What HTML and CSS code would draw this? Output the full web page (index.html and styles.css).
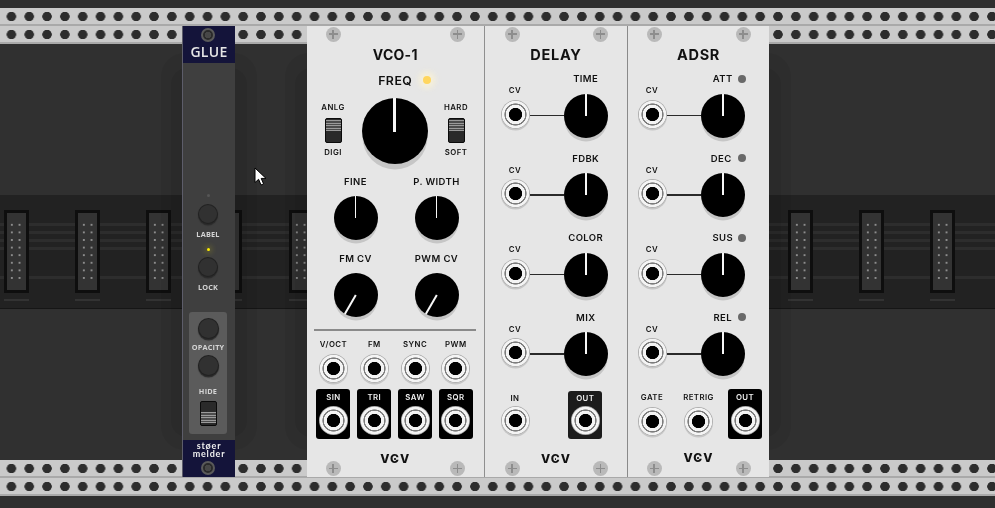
FILE: index.html
```html
<!DOCTYPE html>
<html lang="en">
<head>
    <meta charset="UTF-8">
    <meta name="viewport" content="width=device-width, initial-scale=1.0">
    <title>VCV Rack</title>
    <link rel="stylesheet" href="styles.css">
</head>
<body>
<div class="rack">
    <div class="rail"></div>
    <div class="rail"></div>
    <div class="wall"></div>
    <div class="band">
        <div class="conn"><div class="conn-body"><div class="pins"></div></div><div class="foot"></div></div>
        <div class="conn"><div class="conn-body"><div class="pins"></div></div><div class="foot"></div></div>
        <div class="conn"><div class="conn-body"><div class="pins"></div></div><div class="foot"></div></div>
        <div class="conn"><div class="conn-body"><div class="pins"></div></div><div class="foot"></div></div>
        <div class="conn"><div class="conn-body"><div class="pins"></div></div><div class="foot"></div></div>
        <div class="conn"><div class="conn-body"><div class="pins"></div></div><div class="foot"></div></div>
        <div class="conn"><div class="conn-body"><div class="pins"></div></div><div class="foot"></div></div>
        <div class="conn"><div class="conn-body"><div class="pins"></div></div><div class="foot"></div></div>
        <div class="conn"><div class="conn-body"><div class="pins"></div></div><div class="foot"></div></div>
        <div class="conn"><div class="conn-body"><div class="pins"></div></div><div class="foot"></div></div>
        <div class="conn"><div class="conn-body"><div class="pins"></div></div><div class="foot"></div></div>
        <div class="conn"><div class="conn-body"><div class="pins"></div></div><div class="foot"></div></div>
        <div class="conn"><div class="conn-body"><div class="pins"></div></div><div class="foot"></div></div>
        <div class="conn"><div class="conn-body"><div class="pins"></div></div><div class="foot"></div></div>
    </div>
    <div class="wall"></div>
    <div class="rail"></div>
    <div class="rail"></div>

    <div class="modules">
        <!-- glue -->
        <div class="glue shade">
            <div class="glue-head">
                <div class="glue-screw"></div>
                <div class="glue-title">GLUE</div>
            </div>
            <div class="glue-body">
                <div class="dot-off"></div>
                <div class="btn btn-label"></div>
                <div class="glue-lbl lbl-label">LABEL</div>
                <div class="dot-on"></div>
                <div class="btn btn-lock"></div>
                <div class="glue-lbl lbl-lock">LOCK</div>
                <div class="glue-box">
                    <div class="btn btn-big"></div>
                    <div class="glue-lbl lbl-opacity">OPACITY</div>
                    <div class="btn btn-big btn-hide"></div>
                    <div class="glue-lbl lbl-hide">HIDE</div>
                    <div class="switch switch-low"></div>
                </div>
            </div>
            <div class="glue-foot">
                <div class="brand">støer</div>
                <div class="brand">melder</div>
                <div class="glue-screw"></div>
            </div>
        </div>

        <div class="bank shade">
            <!-- vco -->
            <div class="panel vco">
                <div class="screws"><div class="screw"></div><div class="screw"></div></div>
                <div class="title">VCO-1</div>
                <div class="freq-row">
                    <div></div>
                    <div class="lbl-lg">FREQ</div>
                    <div><div class="led-yellow"></div></div>
                </div>
                <div class="main-row">
                    <div class="side">
                        <div class="lbl-sm">ANLG</div>
                        <div class="switch"></div>
                        <div class="lbl-sm">DIGI</div>
                    </div>
                    <div class="knob knob-xl"></div>
                    <div class="side">
                        <div class="lbl-sm">HARD</div>
                        <div class="switch"></div>
                        <div class="lbl-sm">SOFT</div>
                    </div>
                </div>
                <div class="knob-grid">
                    <div class="cell"><div class="lbl-md">FINE</div><div class="knob"></div></div>
                    <div class="cell"><div class="lbl-md">P. WIDTH</div><div class="knob"></div></div>
                    <div class="cell"><div class="lbl-md">FM CV</div><div class="knob knob-min"></div></div>
                    <div class="cell"><div class="lbl-md">PWM CV</div><div class="knob knob-min"></div></div>
                </div>
                <div class="divider"></div>
                <div class="jack-grid">
                    <div class="jack"><div class="lbl-sm">V/OCT</div><div class="port"></div></div>
                    <div class="jack"><div class="lbl-sm">FM</div><div class="port"></div></div>
                    <div class="jack"><div class="lbl-sm">SYNC</div><div class="port"></div></div>
                    <div class="jack"><div class="lbl-sm">PWM</div><div class="port"></div></div>
                    <div class="out"><div class="lbl-sm">SIN</div><div class="port"></div></div>
                    <div class="out"><div class="lbl-sm">TRI</div><div class="port"></div></div>
                    <div class="out"><div class="lbl-sm">SAW</div><div class="port"></div></div>
                    <div class="out"><div class="lbl-sm">SQR</div><div class="port"></div></div>
                </div>
                <div class="logo">VCV</div>
                <div class="screws screws-low"><div class="screw"></div><div class="screw"></div></div>
            </div>

            <!-- delay -->
            <div class="panel delay">
                <div class="screws"><div class="screw"></div><div class="screw"></div></div>
                <div class="title title-wide">DELAY</div>
                <div class="rows">
                    <div class="row">
                        <div class="cv"><div class="lbl-sm">CV</div><div class="port"></div></div>
                        <div class="wire"></div>
                        <div class="param"><div class="lbl-md">TIME</div><div class="knob"></div></div>
                    </div>
                    <div class="row">
                        <div class="cv"><div class="lbl-sm">CV</div><div class="port"></div></div>
                        <div class="wire"></div>
                        <div class="param"><div class="lbl-md">FDBK</div><div class="knob"></div></div>
                    </div>
                    <div class="row">
                        <div class="cv"><div class="lbl-sm">CV</div><div class="port"></div></div>
                        <div class="wire"></div>
                        <div class="param"><div class="lbl-md">COLOR</div><div class="knob"></div></div>
                    </div>
                    <div class="row">
                        <div class="cv"><div class="lbl-sm">CV</div><div class="port"></div></div>
                        <div class="wire"></div>
                        <div class="param"><div class="lbl-md">MIX</div><div class="knob"></div></div>
                    </div>
                </div>
                <div class="bottom bottom-delay">
                    <div class="jack jack-in"><div class="lbl-sm">IN</div><div class="port"></div></div>
                    <div class="out out-soft"><div class="lbl-sm">OUT</div><div class="port"></div></div>
                </div>
                <div class="logo">VCV</div>
                <div class="screws screws-low"><div class="screw"></div><div class="screw"></div></div>
            </div>

            <!-- adsr -->
            <div class="panel adsr">
                <div class="screws"><div class="screw"></div><div class="screw"></div></div>
                <div class="title title-wide">ADSR</div>
                <div class="rows">
                    <div class="row">
                        <div class="cv"><div class="lbl-sm">CV</div><div class="port"></div></div>
                        <div class="wire"></div>
                        <div class="param"><div class="lbl-md">ATT</div><div class="led-grey"></div><div class="knob"></div></div>
                    </div>
                    <div class="row">
                        <div class="cv"><div class="lbl-sm">CV</div><div class="port"></div></div>
                        <div class="wire"></div>
                        <div class="param"><div class="lbl-md lbl-left">DEC</div><div class="led-grey"></div><div class="knob"></div></div>
                    </div>
                    <div class="row">
                        <div class="cv"><div class="lbl-sm">CV</div><div class="port"></div></div>
                        <div class="wire"></div>
                        <div class="param"><div class="lbl-md">SUS</div><div class="led-grey"></div><div class="knob"></div></div>
                    </div>
                    <div class="row">
                        <div class="cv"><div class="lbl-sm">CV</div><div class="port"></div></div>
                        <div class="wire"></div>
                        <div class="param"><div class="lbl-md">REL</div><div class="led-grey"></div><div class="knob"></div></div>
                    </div>
                </div>
                <div class="bottom bottom-adsr">
                    <div class="jack"><div class="lbl-sm">GATE</div><div class="port"></div></div>
                    <div class="jack"><div class="lbl-sm">RETRIG</div><div class="port"></div></div>
                    <div class="out"><div class="lbl-sm">OUT</div><div class="port"></div></div>
                </div>
                <div class="logo">VCV</div>
                <div class="screws screws-low"><div class="screw"></div><div class="screw"></div></div>
            </div>
        </div>
    </div>

    <svg class="cursor" width="14" height="20" viewBox="0 0 14 20">
        <path d="M1 1 L1 15.5 L4.6 12.3 L7 18 L9.6 16.9 L7.2 11.4 L12 11.4 Z" fill="#fff" stroke="#000" stroke-width="1"/>
    </svg>
</div>
</body>
</html>
```

FILE: styles.css
```css
body {
    margin: 0px;
    background-color: #2f2f2f;
    font-family: "Inter", "Liberation Sans", sans-serif;
    overflow: hidden;
}
.rack {
    position: relative;
    width: 995px;
    height: 508px;
    padding-top: 8px;
    box-sizing: border-box;
    overflow: hidden;
    background-color: #2f2f2f;
}

/* rack background */
.rail {
    height: 16px;
    border-bottom: 2px solid #a9a9a9;
    background-color: #cacaca;
    background-image: radial-gradient(circle at 8.9px 8.5px, #2d2d2d 4.4px, transparent 5px);
    background-size: 17.83px 16px;
    background-position: 2.5px 0;
    background-repeat: repeat-x;
}
.wall {
    height: 151px;
    background-color: #303030;
}
.band {
    height: 114px;
    box-sizing: border-box;
    padding: 15px 0 0 3.5px;
    display: flex;
    gap: 46.3px;
    border-bottom: 1.5px solid #161616;
    background-color: #222222;
    background-image:
        linear-gradient(#2d2d2d, #2d2d2d),
        linear-gradient(#2d2d2d, #2d2d2d),
        linear-gradient(#2d2d2d, #2d2d2d),
        linear-gradient(#2d2d2d, #2d2d2d),
        linear-gradient(#2d2d2d, #2d2d2d);
    background-size: 100% 3px;
    background-repeat: no-repeat;
    background-position: 0 28px, 0 36px, 0 44px, 0 52px, 0 81px;
}
.conn {
    width: 25px;
    flex: none;
}
.conn-body {
    height: 83px;
    box-sizing: border-box;
    border: 3px solid #0e0e0e;
    background-color: #333333;
    display: flex;
    align-items: center;
    justify-content: center;
}
.pins {
    width: 15.4px;
    height: 60.8px;
    background-image: radial-gradient(circle, #8c8c8c 1px, transparent 1.4px);
    background-size: 7.7px 7.6px;
}
.foot {
    height: 2px;
    margin-top: 6px;
    background-color: #333333;
}

/* modules */
.modules {
    position: absolute;
    z-index: 1;
    top: 26px;
    left: 0;
    height: 451px;
    display: flex;
    padding-left: 182px;
    filter: blur(0.35px);
}
.bank {
    display: flex;
    margin-left: 71.5px;
}
/* stepped shadow the modules drop on the rack */
.shade {
    position: relative;
}
.shade::before, .shade::after {
    content: "";
    position: absolute;
    z-index: -1;
    background-color: rgba(0, 0, 0, 0.06);
}
.shade::before {
    left: -22px;
    right: -22px;
    top: 27px;
    bottom: 27px;
    border-radius: 24px;
}
.shade::after {
    left: -12px;
    right: -12px;
    top: 42px;
    bottom: 40px;
    border-radius: 16px;
}
.panel {
    height: 451px;
    box-sizing: border-box;
    display: flex;
    flex-direction: column;
    background-color: #e6e6e6;
    color: #111;
}
.vco {
    width: 178.5px;
    border-right: 1.5px solid #8f8f8f;
}
.delay {
    width: 143px;
    border-right: 1.5px solid #8a8a8a;
}
.adsr {
    width: 141px;
}
.screws {
    height: 16px;
    flex: none;
    display: flex;
    justify-content: space-between;
    padding: 0.5px 19px 0;
    box-sizing: border-box;
}
.delay .screws {
    padding: 0.5px 19px 0 19.5px;
}
.adsr .screws {
    padding: 0.5px 18.5px 0 18.5px;
}
.screws-low {
    margin-top: auto;
    height: 16.5px;
}
.screw {
    position: relative;
    width: 15px;
    height: 15px;
    border-radius: 50%;
    background-color: #b9b9b9;
}
.screw::before, .screw::after {
    content: "";
    position: absolute;
    background-color: #8d8d8d;
}
.screw::before {
    left: 3px;
    top: 6.75px;
    width: 9px;
    height: 1.5px;
}
.screw::after {
    left: 6.75px;
    top: 3px;
    width: 1.5px;
    height: 9px;
}
.title {
    height: 26px;
    flex: none;
    line-height: 26px;
    text-align: center;
    font-size: 14px;
    font-weight: 700;
    letter-spacing: 0.3px;
}
.title-wide {
    font-size: 14.5px;
    letter-spacing: 0.7px;
}
.lbl-lg {
    font-size: 12.3px;
    font-weight: 600;
    letter-spacing: 0.5px;
    text-align: center;
}
.lbl-md {
    height: 14px;
    line-height: 14px;
    font-size: 9.5px;
    font-weight: 600;
    letter-spacing: 0.4px;
    text-align: center;
    white-space: nowrap;
}
.lbl-sm {
    height: 11px;
    line-height: 11px;
    font-size: 7.8px;
    font-weight: 600;
    letter-spacing: 0.45px;
    text-align: center;
    white-space: nowrap;
}
.logo {
    position: relative;
    flex: none;
    height: 10px;
    margin-top: 15px;
    margin-bottom: -6px;
    line-height: 10px;
    text-align: center;
    font-size: 12px;
    font-weight: 800;
    letter-spacing: 1px;
}
.logo::after {
    content: "";
    position: absolute;
    left: calc(50% - 1.3px);
    top: 4.2px;
    width: 1.6px;
    height: 1.6px;
    border-radius: 50%;
    background-color: #111;
}

/* knobs */
.knob {
    position: relative;
    width: 44px;
    height: 44px;
    flex: none;
    border-radius: 50%;
    background-color: #000;
    box-shadow: 0 4px 0 -0.5px #c6c6c6;
}
.knob::after {
    content: "";
    position: absolute;
    left: calc(50% - 0.9px);
    top: 0;
    width: 1.8px;
    height: 50%;
    background-color: #f7f7f7;
    transform-origin: 50% 100%;
}
.knob-min::after {
    transform: rotate(210deg);
}
.knob-xl {
    width: 66px;
    height: 66px;
    box-shadow: 0 6px 0 -0.5px #c6c6c6;
}
.knob-xl::after {
    left: calc(50% - 1.1px);
    width: 2.2px;
    height: 34px;
}

/* ports */
.port {
    width: 29px;
    height: 29px;
    flex: none;
    border-radius: 50%;
    background: radial-gradient(circle, #000 0 6.3px, #f4f4f4 6.9px 9.5px, #7d7d7d 10px 10.8px, #f4f4f4 11.4px 13.3px, #b0b0b0 14px 14.5px);
    box-shadow: 0 1.5px 0 0 #c6c6c6;
}
.out .port {
    box-shadow: none;
    margin-top: 2.5px;
}
.out {
    width: 34px;
    height: 50px;
    box-sizing: border-box;
    padding-top: 3px;
    border-radius: 3px;
    background-color: #000;
    color: #f0f0f0;
    display: flex;
    flex-direction: column;
    align-items: center;
}
.out-soft {
    height: 48px;
    padding-top: 2px;
    background-color: #1c1c1c;
}
.out-soft .port {
    margin-top: 2px;
}
.jack {
    display: flex;
    flex-direction: column;
    align-items: center;
    width: 40px;
}
.jack .port {
    margin-top: 3.5px;
}

/* vco */
.freq-row {
    height: 24px;
    flex: none;
    display: grid;
    grid-template-columns: 1fr auto 1fr;
    align-items: center;
}
.led-yellow {
    width: 8px;
    height: 8px;
    margin-left: 10.5px;
    border-radius: 50%;
    background-color: #ffd65e;
    box-shadow: 0 0 5px 5px rgba(255, 245, 210, 0.55);
}
.main-row {
    height: 81px;
    flex: none;
    display: flex;
    justify-content: space-between;
    padding: 6px 13px 0 11.5px;
    box-sizing: border-box;
}
.side {
    width: 30px;
    padding-top: 4px;
    display: flex;
    flex-direction: column;
    align-items: center;
}
.side .switch {
    margin: 5px 0 4px;
}
.switch {
    width: 17px;
    height: 25px;
    flex: none;
    box-sizing: border-box;
    border: 1.5px solid #0a0a0a;
    border-radius: 2px;
    background:
        repeating-linear-gradient(#9a9a9a 0 1px, #4c4c4c 1px 2.6px) 0 1px / 100% 11px no-repeat,
        #2a2a2a;
}
.switch-low {
    margin-top: 5px;
    background:
        repeating-linear-gradient(#9a9a9a 0 1px, #4c4c4c 1px 2.6px) 0 10px / 100% 11px no-repeat,
        #2a2a2a;
}
.knob-grid {
    display: grid;
    grid-template-columns: repeat(2, 81px);
    padding-left: 8.5px;
}
.cell {
    height: 77px;
    padding-top: 1px;
    box-sizing: border-box;
    display: flex;
    flex-direction: column;
    align-items: center;
}
.cell .knob {
    margin-top: 7px;
}
.cell .lbl-md {
    height: 15px;
    line-height: 15px;
}
.divider {
    height: 2px;
    flex: none;
    margin: 2px 8px 0 7.5px;
    background-color: #8a8a8a;
}
.jack-grid {
    flex: none;
    height: 108px;
    padding: 8px 0 0 6.6px;
    box-sizing: border-box;
    display: grid;
    grid-template-columns: repeat(4, 40.8px);
    grid-template-rows: 50px 50px;
    justify-items: center;
}

/* delay and adsr */
.rows {
    flex: none;
    padding-top: 4px;
}
.row {
    height: 79.5px;
    display: flex;
    padding-left: 15.5px;
}
.adsr .row {
    padding-left: 9.5px;
}
.cv {
    padding-top: 13px;
    width: 29px;
    display: flex;
    flex-direction: column;
    align-items: center;
}
.cv .port {
    margin-top: 3.5px;
}
.wire {
    width: 34.2px;
    height: 1.6px;
    margin-top: 42.5px;
    background-color: #2a2a2a;
}
.param {
    position: relative;
    width: 44px;
}
.param .knob {
    margin-top: 7.7px;
}
.lbl-left {
    margin-left: -3px;
}
.led-grey {
    position: absolute;
    top: 2.5px;
    left: 37.5px;
    width: 8px;
    height: 8px;
    border-radius: 50%;
    background-color: #696969;
}
.bottom {
    flex: none;
    display: flex;
}
.bottom-delay {
    height: 49px;
    padding: 1px 0 0 83.3px;
    box-sizing: border-box;
    position: relative;
}
.jack-in {
    position: absolute;
    left: 10px;
    top: 3px;
}
.jack-in .port {
    margin-top: 2px;
}
.bottom-adsr {
    height: 49px;
    padding-left: 4px;
    margin-top: -1px;
    gap: 6.5px;
    align-items: flex-start;
}
.bottom-adsr .jack {
    padding-top: 3px;
}
.bottom-adsr .out {
    margin-left: 3px;
}

/* glue */
.glue {
    width: 53px;
    height: 451px;
    flex: none;
    box-sizing: border-box;
    display: flex;
    flex-direction: column;
    border-left: 1px solid #5d5d6a;
    background-color: #3f3f3f;
    color: #d4d4d4;
}
.glue-head {
    height: 37px;
    flex: none;
    padding-top: 1.5px;
    box-sizing: border-box;
    display: flex;
    flex-direction: column;
    align-items: center;
    background-color: #14143a;
}
.glue-screw {
    width: 14px;
    height: 14px;
    flex: none;
    margin-right: 2px;
    box-sizing: border-box;
    border: 2px solid #5a5a5a;
    border-radius: 50%;
    background: radial-gradient(circle, #474747 0 3px, #2a2a2a 3.5px);
}
.glue-title {
    font-family: "Open Sans", sans-serif;
    font-size: 14px;
    font-weight: 600;
    line-height: 20px;
    letter-spacing: 0.3px;
    color: #e6e6e6;
}
.glue-body {
    flex: 1;
    display: flex;
    flex-direction: column;
    align-items: center;
    padding: 131px 2px 0 0;
}
.dot-off {
    width: 3px;
    height: 3px;
    flex: none;
    border-radius: 50%;
    background-color: #565656;
}
.dot-on {
    width: 3px;
    height: 3px;
    flex: none;
    margin-top: 9px;
    border-radius: 50%;
    background-color: #ffee00;
    box-shadow: 0 0 5px 3px rgba(255, 238, 0, 0.13);
}
.btn {
    width: 18px;
    height: 18px;
    flex: none;
    border-radius: 50%;
    background-color: #313131;
    box-shadow: 0 0 0 1px #222, 0 1.5px 1px 1px #2a2a2a;
}
.btn-label {
    margin-top: 7.5px;
}
.btn-lock {
    margin-top: 7.5px;
}
.btn-big {
    width: 19px;
    height: 19px;
}
.btn-hide {
    margin-top: 4.5px;
}
.glue-lbl {
    height: 10px;
    flex: none;
    line-height: 10px;
    font-family: "Open Sans", sans-serif;
    font-size: 7.3px;
    font-weight: 700;
    letter-spacing: 0.2px;
    white-space: nowrap;
}
.lbl-label {
    margin-top: 6px;
}
.lbl-lock {
    margin-top: 5.5px;
}
.lbl-opacity {
    margin-top: 3.5px;
}
.lbl-hide {
    margin-top: 10.5px;
}
.glue-box {
    width: 38px;
    height: 122px;
    flex: none;
    margin-top: 20px;
    padding-top: 7.5px;
    box-sizing: border-box;
    display: flex;
    flex-direction: column;
    align-items: center;
    border-radius: 3px;
    background-color: #5b5b5b;
}
.glue-foot {
    height: 37px;
    flex: none;
    padding-top: 2px;
    box-sizing: border-box;
    display: flex;
    flex-direction: column;
    align-items: center;
    background-color: #14143a;
}
.brand {
    height: 7.5px;
    flex: none;
    font-family: "Lato", sans-serif;
    font-size: 9px;
    font-weight: 700;
    line-height: 7.5px;
    letter-spacing: 0.8px;
    color: #efefef;
}
.brand + .brand {
    margin-bottom: 4px;
}

.cursor {
    position: absolute;
    z-index: 2;
    left: 254px;
    top: 167px;
}
```
